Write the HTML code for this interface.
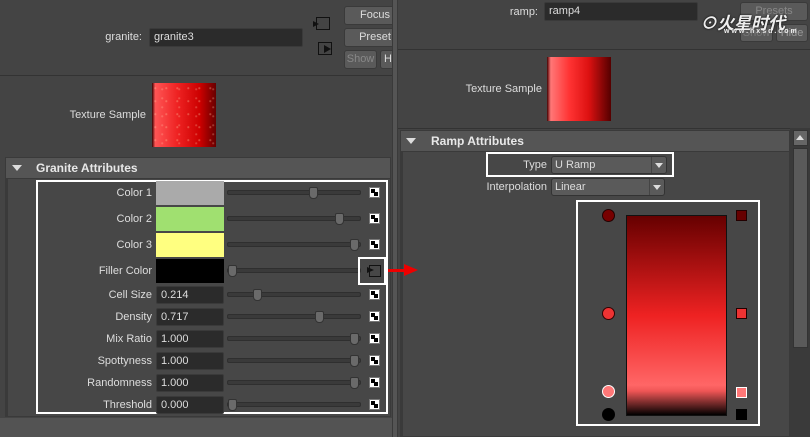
<!DOCTYPE html><html><head><meta charset="utf-8"><style>
*{margin:0;padding:0;box-sizing:border-box}
body{width:810px;height:437px;background:#444;position:relative;overflow:hidden;font-family:"Liberation Sans",sans-serif;font-size:11px;color:#ddd}
.a{position:absolute}
.lbl{position:absolute;text-align:right;white-space:nowrap}
.fld{position:absolute;background:#2b2b2b;border:1px solid #3a3a3a;color:#ddd;padding-left:4px;line-height:16px;border-radius:2px}
.btn{position:absolute;background:#5a5a5a;border:1px solid #3a3a3a;border-radius:3px;color:#ddd;text-align:center;line-height:17px;font-size:11px}
.trk{position:absolute;height:5px;background:#3a3a3a;border:1px solid #2f2f2f;border-radius:2px}
.th{position:absolute;width:9px;height:12px;background:#6a6a6a;border:1px solid #333;border-radius:2px 2px 4px 4px}
.ck{position:absolute;width:11px;height:11px;background:#fff;border:1px solid #777}
.ck:before,.ck:after{content:"";position:absolute;width:4px;height:4px;background:#000}
.ck:before{left:1px;top:1px}.ck:after{right:1px;bottom:1px}
.hdr{position:absolute;background:#555;border:1px solid #3a3a3a;font-weight:bold;color:#e8e8e8;font-size:12px;line-height:20px}
.tri{position:absolute;width:0;height:0;border-left:5px solid transparent;border-right:5px solid transparent;border-top:6px solid #ddd}
</style></head><body>
<div class="a" style="left:0;top:75px;width:392px;height:1px;background:#333"></div>
<div class="lbl" style="left:60px;top:31px;width:82px">granite:</div>
<div class="fld" style="left:149px;top:28px;width:154px;height:19px">granite3</div>
<div class="a" style="left:316px;top:17px;width:14px;height:13px;border:1px solid #111"></div>
<div class="a" style="left:313px;top:21px;border-top:3px solid transparent;border-bottom:3px solid transparent;border-left:6px solid #111"></div>
<div class="a" style="left:318px;top:42px;width:14px;height:13px;border:1px solid #111"></div>
<div class="a" style="left:324px;top:45px;border-top:4px solid transparent;border-bottom:4px solid transparent;border-left:7px solid #111"></div>
<div class="btn" style="left:344px;top:6px;width:52px;height:19px;padding-left:10px">Focus</div>
<div class="btn" style="left:344px;top:28px;width:52px;height:19px;padding-left:10px">Preset</div>
<div class="btn" style="left:344px;top:50px;width:33px;height:19px;color:#888">Show</div>
<div class="btn" style="left:380px;top:50px;width:16px;height:19px">H</div>
<div class="lbl" style="left:40px;top:109px;width:106px">Texture Sample</div>
<div class="a" style="left:152px;top:83px;width:64px;height:64px;background:radial-gradient(circle at 30% 40%,rgba(255,200,160,.35) 0.5px,transparent 1.5px) 0 0/11px 13px,radial-gradient(circle at 60% 70%,rgba(255,190,160,.3) 0.5px,transparent 1.5px) 0 0/17px 9px,linear-gradient(90deg,#300 0,#f55 5%,#e22 40%,#c00 75%,#600 100%)"></div>
<div class="hdr" style="left:5px;top:157px;width:386px;height:22px;padding-left:30px">Granite Attributes</div>
<div class="tri" style="left:12px;top:165px"></div>
<div class="a" style="left:5px;top:179px;width:386px;height:238px;border:1px solid #3a3a3a;border-top:none;background:#474747"></div>
<div class="a" style="left:6px;top:179px;width:2px;height:238px;background:#3a3a3a"></div>
<div class="a" style="left:0;top:418px;width:392px;height:19px;background:#535353"></div>
<div class="a" style="left:36px;top:180px;width:352px;height:234px;border:2px solid #fff"></div>

<div class="lbl" style="left:40px;top:187px;width:112px">Color 1</div>
<div class="a" style="left:156px;top:181px;width:68px;height:24px;background:#aaa"></div>
<div class="lbl" style="left:40px;top:213px;width:112px">Color 2</div>
<div class="a" style="left:156px;top:207px;width:68px;height:24px;background:#a0e070"></div>
<div class="lbl" style="left:40px;top:239px;width:112px">Color 3</div>
<div class="a" style="left:156px;top:233px;width:68px;height:24px;background:#ffff80"></div>
<div class="lbl" style="left:40px;top:265px;width:112px">Filler Color</div>
<div class="a" style="left:156px;top:259px;width:68px;height:24px;background:#000"></div>
<div class="lbl" style="left:40px;top:289px;width:112px">Cell Size</div><div class="fld" style="left:156px;top:286px;width:68px;height:18px">0.214</div>
<div class="lbl" style="left:40px;top:311px;width:112px">Density</div><div class="fld" style="left:156px;top:308px;width:68px;height:18px">0.717</div>
<div class="lbl" style="left:40px;top:333px;width:112px">Mix Ratio</div><div class="fld" style="left:156px;top:330px;width:68px;height:18px">1.000</div>
<div class="lbl" style="left:40px;top:355px;width:112px">Spottyness</div><div class="fld" style="left:156px;top:352px;width:68px;height:18px">1.000</div>
<div class="lbl" style="left:40px;top:377px;width:112px">Randomness</div><div class="fld" style="left:156px;top:374px;width:68px;height:18px">1.000</div>
<div class="lbl" style="left:40px;top:399px;width:112px">Threshold</div><div class="fld" style="left:156px;top:396px;width:68px;height:18px">0.000</div>

<div class="trk" style="left:227px;top:190px;width:134px"></div><div class="th" style="left:309px;top:187px"></div><div class="ck" style="left:369px;top:187px"></div>
<div class="trk" style="left:227px;top:216px;width:134px"></div><div class="th" style="left:335px;top:213px"></div><div class="ck" style="left:369px;top:213px"></div>
<div class="trk" style="left:227px;top:242px;width:134px"></div><div class="th" style="left:350px;top:239px"></div><div class="ck" style="left:369px;top:239px"></div>
<div class="trk" style="left:227px;top:268px;width:134px"></div><div class="th" style="left:228px;top:265px"></div>
<div class="trk" style="left:227px;top:292px;width:134px"></div><div class="th" style="left:253px;top:289px"></div><div class="ck" style="left:369px;top:289px"></div>
<div class="trk" style="left:227px;top:314px;width:134px"></div><div class="th" style="left:315px;top:311px"></div><div class="ck" style="left:369px;top:311px"></div>
<div class="trk" style="left:227px;top:336px;width:134px"></div><div class="th" style="left:350px;top:333px"></div><div class="ck" style="left:369px;top:333px"></div>
<div class="trk" style="left:227px;top:358px;width:134px"></div><div class="th" style="left:350px;top:355px"></div><div class="ck" style="left:369px;top:355px"></div>
<div class="trk" style="left:227px;top:380px;width:134px"></div><div class="th" style="left:350px;top:377px"></div><div class="ck" style="left:369px;top:377px"></div>
<div class="trk" style="left:227px;top:402px;width:134px"></div><div class="th" style="left:228px;top:399px"></div><div class="ck" style="left:369px;top:399px"></div>
<div class="a" style="left:358px;top:257px;width:28px;height:28px;border:2px solid #fff"></div>
<div class="a" style="left:369px;top:265px;width:12px;height:12px;border:1px solid #111"></div>
<div class="a" style="left:367px;top:267px;border-top:3px solid transparent;border-bottom:3px solid transparent;border-left:7px solid #111"></div>
<div class="a" style="left:392px;top:0;width:6px;height:437px;background:#555;border-left:1px solid #3a3a3a;border-right:1px solid #3a3a3a"></div>
<!-- right -->
<div class="lbl" style="left:480px;top:6px;width:58px">ramp:</div>
<div class="fld" style="left:544px;top:2px;width:154px;height:19px">ramp4</div>
<div class="btn" style="left:740px;top:2px;width:68px;height:19px;color:#888">Presets</div>
<div class="btn" style="left:740px;top:24px;width:33px;height:18px;color:#777">Show</div>
<div class="btn" style="left:776px;top:24px;width:32px;height:18px;color:#999">Hide</div>
<div class="a" style="left:700px;top:9px;font-style:italic;font-weight:bold;font-size:17px;color:#eee;font-family:'Liberation Sans','Noto Sans CJK SC',sans-serif;text-shadow:0 0 2px #000">⊙火星时代</div>
<div class="a" style="left:724px;top:28px;font-size:7px;font-weight:bold;color:#eee;letter-spacing:2px">www.hxsd.com</div>
<div class="a" style="left:398px;top:49px;width:412px;height:1px;background:#333"></div>
<div class="lbl" style="left:440px;top:83px;width:102px">Texture Sample</div>
<div class="a" style="left:547px;top:57px;width:64px;height:64px;background:linear-gradient(90deg,#400 0,#f77 6%,#f33 35%,#d11 65%,#500 100%)"></div>
<div class="a" style="left:398px;top:128px;width:392px;height:1px;background:#333"></div>
<div class="hdr" style="left:400px;top:130px;width:390px;height:22px;padding-left:30px">Ramp Attributes</div>
<div class="tri" style="left:406px;top:138px"></div>
<div class="a" style="left:400px;top:152px;width:390px;height:285px;border:1px solid #3a3a3a;border-top:none;background:#474747"></div>
<div class="a" style="left:401px;top:152px;width:2px;height:285px;background:#3a3a3a"></div>
<div class="a" style="left:486px;top:152px;width:188px;height:25px;border:2px solid #fff"></div>
<div class="lbl" style="left:480px;top:159px;width:67px">Type</div>
<div class="a" style="left:551px;top:156px;width:116px;height:18px;background:#5a5a5a;border:1px solid #333;border-radius:3px;line-height:16px;padding-left:3px">U Ramp</div>
<div class="a" style="left:651px;top:157px;width:1px;height:16px;background:#444"></div>
<div class="a" style="left:655px;top:163px;border-left:4px solid transparent;border-right:4px solid transparent;border-top:5px solid #ddd"></div>
<div class="lbl" style="left:470px;top:181px;width:77px">Interpolation</div>
<div class="a" style="left:551px;top:178px;width:114px;height:18px;background:#5a5a5a;border:1px solid #333;border-radius:3px;line-height:16px;padding-left:3px">Linear</div>
<div class="a" style="left:649px;top:179px;width:1px;height:16px;background:#444"></div>
<div class="a" style="left:653px;top:185px;border-left:4px solid transparent;border-right:4px solid transparent;border-top:5px solid #ddd"></div>
<div class="a" style="left:576px;top:200px;width:184px;height:226px;border:2px solid #fff"></div>
<div class="a" style="left:626px;top:215px;width:101px;height:201px;border:1px solid #111;background:linear-gradient(180deg,#600 0,#a11 25%,#e22 50%,#f66 85%,#e55 88%,#000 100%)"></div>
<div class="a" style="left:602px;top:209px;width:13px;height:13px;border-radius:50%;background:#700;border:1px solid #200"></div>
<div class="a" style="left:602px;top:307px;width:13px;height:13px;border-radius:50%;background:#e33;border:1px solid #300"></div>
<div class="a" style="left:602px;top:385px;width:13px;height:13px;border-radius:50%;background:#f77;border:1px solid #fff"></div>
<div class="a" style="left:602px;top:408px;width:13px;height:13px;border-radius:50%;background:#000"></div>
<div class="a" style="left:736px;top:210px;width:11px;height:11px;background:#600;border:1px solid #200"></div>
<div class="a" style="left:736px;top:308px;width:11px;height:11px;background:#e33;border:1px solid #200"></div>
<div class="a" style="left:736px;top:387px;width:11px;height:11px;background:#f77;border:1px solid #fff"></div>
<div class="a" style="left:736px;top:409px;width:11px;height:11px;background:#000"></div>
<div class="a" style="left:790px;top:128px;width:20px;height:309px;background:#3a3a3a"></div>
<div class="a" style="left:793px;top:130px;width:15px;height:16px;background:#666;border:1px solid #333"></div>
<div class="a" style="left:796px;top:135px;border-left:4px solid transparent;border-right:4px solid transparent;border-bottom:5px solid #ddd"></div>
<div class="a" style="left:793px;top:148px;width:15px;height:200px;background:#5a5a5a;border:1px solid #333"></div>
<!-- arrow on top -->
<div class="a" style="left:388px;top:269px;width:18px;height:3px;background:#e00"></div>
<div class="a" style="left:404px;top:264px;border-top:6px solid transparent;border-bottom:6px solid transparent;border-left:14px solid #e00"></div>
</body></html>
